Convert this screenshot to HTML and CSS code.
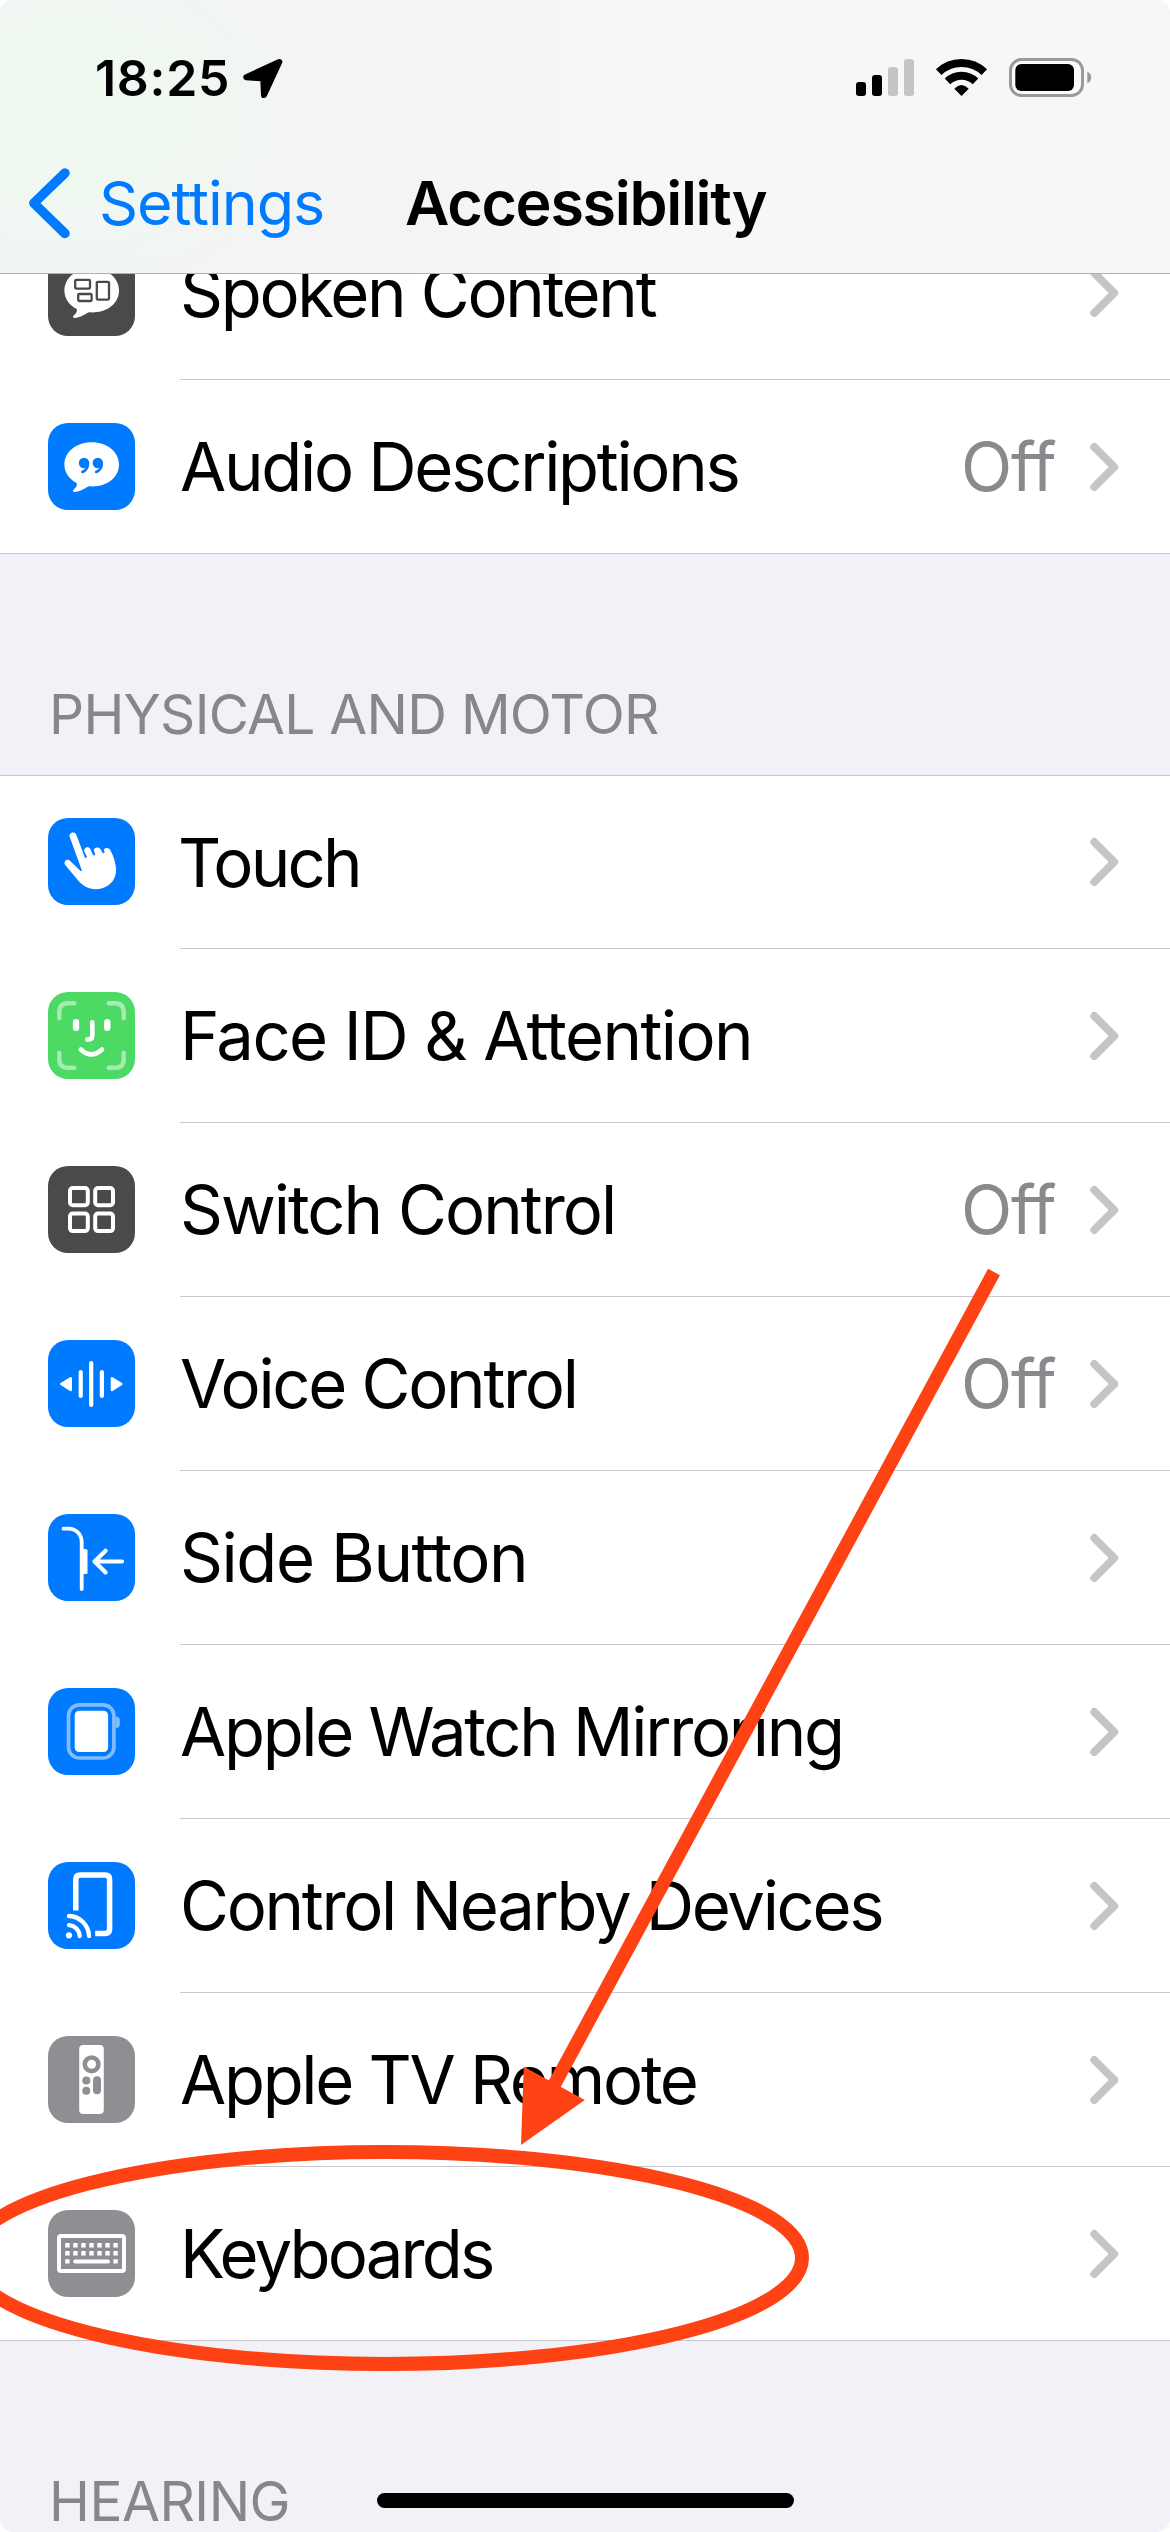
FILE: index.html
```
<!DOCTYPE html>
<html lang="en">
<head>
<meta charset="utf-8">
<title>Accessibility</title>
<link rel="stylesheet" href="styles.css">
</head>
<body>
<svg width="0" height="0" class="defs" aria-hidden="true">
  <symbol id="chevron" viewBox="0 0 34 60">
    <path d="M4.3 10 L24.2 30 L4.3 50" fill="none" stroke="#c5c5c7" stroke-width="8" stroke-linecap="round" stroke-linejoin="round"/>
  </symbol>
</svg>
<div class="screen">
  <header class="top">
    <div class="status">
      <span class="time">18:25</span>
      <svg class="location" width="44" height="44" viewBox="240 56 44 44"><path d="M279.3 62 L246.3 77.2 L263.2 78.6 L264 95 Z" stroke="#000" stroke-width="6" stroke-linejoin="round"/></svg>
      <svg class="indicators" width="240" height="44" viewBox="853 56 240 44">
        <rect x="856" y="82" width="10" height="14" rx="3"/>
        <rect x="872" y="75" width="10" height="21" rx="3"/>
        <rect x="888" y="67" width="10" height="29" rx="3" fill="#c5c5c5"/>
        <rect x="904" y="59" width="10" height="37" rx="3" fill="#c5c5c5"/>
        <g fill="none" stroke="#000">
          <path d="M938.7 72.1 A33 33 0 0 1 984.3 72.1" stroke-width="8"/>
          <path d="M947.5 81.4 A20.2 20.2 0 0 1 975.5 81.4" stroke-width="8"/>
        </g>
        <path d="M961.5 96 L954.3 88.7 Q961.5 81.5 968.7 88.7 Z"/>
        <rect x="1010.5" y="59.5" width="72" height="36" rx="11" fill="#fff" fill-opacity=".5" stroke="#999" stroke-width="3"/>
        <rect x="1015.3" y="64" width="58.7" height="27" rx="6"/>
        <path d="M1087.3 71.5 C1092.5 74 1092.5 81 1087.3 83.5 Z" fill="#999"/>
      </svg>
    </div>
    <nav class="navbar">
      <a class="back">
        <svg width="50" height="80" viewBox="25 163 50 80"><path d="M65 173 L33.8 203.2 L65 233.5" fill="none" stroke="#007aff" stroke-width="9.5" stroke-linecap="round" stroke-linejoin="round"/></svg>
        <span>Settings</span>
      </a>
      <h1 class="title">Accessibility</h1>
    </nav>
  </header>

  <main class="content">
    <ul class="group scrolled">
      <li class="row">
        <svg class="icon" viewBox="0 0 87 87"><rect width="87" height="87" rx="20" fill="#4a4a4a"/>
          <path d="M43.7 19.3 C59.5 19.3 71 29 71 41.5 C71 54.5 59 64.5 41 63.3 C36.5 65.5 32 68.8 26.5 69 C24 68.5 25 66.8 27 65.2 C28.6 63.5 29.2 62.5 28.7 60 C21 56 16.4 49.5 16.4 41.5 C16.4 29 28 19.3 43.7 19.3 Z" fill="#fff"/>
          <g fill="none" stroke="#4a4a4a" stroke-width="2.3"><rect x="27.2" y="30.8" width="14.8" height="8.8" rx="1"/><rect x="30.2" y="45" width="13.4" height="7" rx="1"/><rect x="48.8" y="32.8" width="12.2" height="17.8" rx="1"/></g></svg>
        <div class="cell"><span class="label">Spoken Content</span><svg class="chev"><use href="#chevron"/></svg></div>
      </li>
      <li class="row">
        <svg class="icon" viewBox="0 0 87 87"><rect width="87" height="87" rx="20" fill="#007aff"/>
          <path d="M43.7 19.3 C59.5 19.3 71 29 71 41.5 C71 54.5 59 64.5 41 63.3 C36.5 65.5 32 68.8 26.5 69 C24 68.5 25 66.8 27 65.2 C28.6 63.5 29.2 62.5 28.7 60 C21 56 16.4 49.5 16.4 41.5 C16.4 29 28 19.3 43.7 19.3 Z" fill="#fff"/>
          <g><circle cx="36" cy="40" r="5.2" fill="#007aff"/><path d="M40 39.5 Q40.5 46.5 34.3 49" fill="none" stroke="#007aff" stroke-width="2.5" stroke-linecap="round"/></g>
          <g transform="translate(13.8 0)"><circle cx="36" cy="40" r="5.2" fill="#007aff"/><path d="M40 39.5 Q40.5 46.5 34.3 49" fill="none" stroke="#007aff" stroke-width="2.5" stroke-linecap="round"/></g></svg>
        <div class="cell"><span class="label">Audio Descriptions</span><span class="value">Off</span><svg class="chev"><use href="#chevron"/></svg></div>
      </li>
    </ul>

    <h2 class="heading motor">PHYSICAL AND MOTOR</h2>
    <ul class="group main">
      <li class="row">
        <svg class="icon" viewBox="0 0 87 87"><rect width="87" height="87" rx="20" fill="#007aff"/>
          <path d="M21.7 18.8 C20.3 14.8 26.6 12.6 28.2 16.6 L36.8 39.3 C37.3 40.7 39.2 40 38.9 38.6 L36.2 33.2 C35.5 30 39.5 27.6 42.2 30.7 L45 36.8 C45.8 38.2 47.6 37.4 47.2 36 L45.8 32.6 C46 29.5 50.3 28.2 52.4 31 L54.4 34.6 C55 36 56.9 35.3 56.5 33.8 L55.8 31.6 C57 29.2 61 29.4 62.5 32.4 C66 39 68.3 46.5 68.1 53.5 C67 64.5 58.5 71.2 47 71.2 C38.5 70.8 33.5 66.5 28.5 60.5 L17.2 46.9 C15 43.6 18.8 40 22 42.7 L32.6 53 C33.4 53.5 34 53 33.6 51.8 Z" fill="#fff"/></svg>
        <div class="cell"><span class="label touch">Touch</span><svg class="chev"><use href="#chevron"/></svg></div>
      </li>
      <li class="row">
        <svg class="icon" viewBox="0 0 87 87"><rect width="87" height="87" rx="20" fill="#4cd964"/>
          <g fill="none" stroke="#fff" stroke-linecap="round">
            <path stroke-opacity=".5" stroke-width="4.4" d="M11.3 26.3 V20 Q11.3 11.2 20 11.2 H26.3 M60.7 11.2 H67 Q75.7 11.2 75.7 20 V26.3 M75.7 60.7 V67 Q75.7 75.8 67 75.8 H60.7 M26.3 75.8 H20 Q11.3 75.8 11.3 67 V60.7"/>
            <path stroke-width="6.4" d="M28 30.3 V35.7 M59.3 30.3 V35.7"/>
            <path stroke-width="4.6" d="M44.3 30.3 V44 Q44.3 47.6 39.3 47.6 M32.8 57.5 Q43.3 67.3 54 57.5"/>
          </g></svg>
        <div class="cell"><span class="label face">Face ID &amp; Attention</span><svg class="chev"><use href="#chevron"/></svg></div>
      </li>
      <li class="row">
        <svg class="icon" viewBox="0 0 87 87"><rect width="87" height="87" rx="20" fill="#4a4a4a"/>
          <g fill="none" stroke="#fff" stroke-width="4"><rect x="22" y="22" width="17.8" height="17.2" rx="2.8"/><rect x="47.2" y="22" width="17.8" height="17.2" rx="2.8"/><rect x="22" y="47.5" width="17.8" height="17.6" rx="2.8"/><rect x="47.2" y="47.5" width="17.8" height="17.6" rx="2.8"/></g></svg>
        <div class="cell"><span class="label switch">Switch Control</span><span class="value">Off</span><svg class="chev"><use href="#chevron"/></svg></div>
      </li>
      <li class="row">
        <svg class="icon" viewBox="0 0 87 87"><rect width="87" height="87" rx="20" fill="#007aff"/>
          <path d="M43.2 23 V65 M32.7 32 V56 M53.9 32 V56" stroke="#fff" stroke-width="4.2" stroke-linecap="round"/>
          <path d="M13.3 44 L22.7 38.3 V50 Z M73.3 44 L64 38.3 V50 Z" fill="#fff" stroke="#fff" stroke-width="2.6" stroke-linejoin="round"/></svg>
        <div class="cell"><span class="label">Voice Control</span><span class="value">Off</span><svg class="chev"><use href="#chevron"/></svg></div>
      </li>
      <li class="row">
        <svg class="icon" viewBox="0 0 87 87"><rect width="87" height="87" rx="20" fill="#007aff"/>
          <g fill="none" stroke="#fff" stroke-width="3.8" stroke-linecap="round" stroke-linejoin="round"><path d="M15.5 14.7 H20 C28 14.7 33.7 20 33.7 28.5 V75"/><path d="M46.5 47.5 H74 M57.6 36.8 L46.5 47.5 L57.6 58.4" stroke-width="4.2"/></g>
          <path d="M34 35 H38 Q39.5 35 39.5 36.5 V58.5 Q39.5 60 38 60 H34 Z" fill="#fff"/></svg>
        <div class="cell"><span class="label side">Side Button</span><svg class="chev"><use href="#chevron"/></svg></div>
      </li>
      <li class="row">
        <svg class="icon" viewBox="0 0 87 87"><rect width="87" height="87" rx="20" fill="#007aff"/>
          <rect x="20.5" y="16.8" width="45.4" height="53.2" rx="11" fill="none" stroke="#80bdff" stroke-width="3.7"/>
          <path d="M67.7 28.5 Q71.8 28.5 71.8 32 V36.5 Q71.8 40 67.7 40 Z" fill="#80bdff"/>
          <rect x="26.7" y="22.7" width="33.4" height="41.3" rx="4.5" fill="#fff"/></svg>
        <div class="cell"><span class="label">Apple Watch Mirroring</span><svg class="chev"><use href="#chevron"/></svg></div>
      </li>
      <li class="row">
        <svg class="icon" viewBox="0 0 87 87"><rect width="87" height="87" rx="20" fill="#007aff"/>
          <g fill="none" stroke="#fff"><path d="M27.8 48.5 V17.5 Q27.8 13.1 32.2 13.1 H57.2 Q61.6 13.1 61.6 17.5 V67 Q61.6 71.5 57.2 71.5 H47.2" stroke-width="5.5"/>
          <path d="M21 63.2 A11.5 11.5 0 0 1 31.7 74 M21 54 A20.8 20.8 0 0 1 41 74" stroke-width="4.3" stroke-linecap="round"/></g><circle cx="21" cy="73.3" r="3.1" fill="#fff"/></svg>
        <div class="cell"><span class="label">Control Nearby Devices</span><svg class="chev"><use href="#chevron"/></svg></div>
      </li>
      <li class="row">
        <svg class="icon" viewBox="0 0 87 87"><rect width="87" height="87" rx="20" fill="#8e8e93"/>
          <rect x="31.2" y="9" width="24.6" height="69" rx="4" fill="#fff"/>
          <circle cx="43.6" cy="28.3" r="6.8" fill="none" stroke="#8e8e93" stroke-width="4.6"/>
          <g fill="#8e8e93"><circle cx="38.3" cy="44.5" r="4"/><circle cx="38.3" cy="54.7" r="4"/><rect x="45" y="40.3" width="8" height="18" rx="4"/></g></svg>
        <div class="cell"><span class="label">Apple TV Remote</span><svg class="chev"><use href="#chevron"/></svg></div>
      </li>
      <li class="row">
        <svg class="icon" viewBox="0 0 87 87"><rect width="87" height="87" rx="20" fill="#8e8e93"/>
          <rect x="11" y="26" width="65" height="35" rx="2" fill="none" stroke="#fff" stroke-width="4"/>
          <g stroke="#fff" stroke-width="4.4"><path d="M17.2 35.2 H70.5 M17.2 43.3 H70.5" stroke-dasharray="4.4 3.63"/><path d="M17.2 51.4 H21.6 M65.4 51.4 H69.8"/><path d="M27.2 51.4 H60" stroke-width="4" stroke-linecap="round"/></g></svg>
        <div class="cell"><span class="label keys">Keyboards</span><svg class="chev"><use href="#chevron"/></svg></div>
      </li>
    </ul>
    <h2 class="heading">HEARING</h2>
  </main>

  <div class="home"></div>
  <svg class="markup" width="1170" height="2532" viewBox="0 0 1170 2532">
    <ellipse cx="385" cy="2258" rx="417" ry="106" fill="none" stroke="#ff4214" stroke-width="14"/>
    <path d="M994 1272 L553 2087" stroke="#ff4214" stroke-width="13.5"/>
    <path d="M521 2145 L523.8 2066.7 L584.8 2100 Z" fill="#ff4214"/>
  </svg>
</div>
</body>
</html>
```
FILE: styles.css
```
* { box-sizing: border-box; }

body {
  margin: 0;
  background: #fff;
  font-family: Inter, "Liberation Sans", sans-serif;
  color: #000;
}

.defs { position: absolute; }

.screen {
  position: relative;
  display: flex;
  flex-direction: column;
  width: 1170px;
  height: 2532px;
  overflow: hidden;
  border-radius: 14px;
  background: #f2f1f7;
}

.top {
  flex: none;
  height: 274px;
  border-bottom: 1px solid #b0b0b2;
  background:
    radial-gradient(ellipse 260px 190px at 70px 110px, #eefaf0 0%, rgba(240, 248, 242, 0) 100%),
    linear-gradient(90deg, #f2f4f3 0%, #f4f4f4 35%, #f7f7f7 55%);
}

.status {
  display: flex;
  align-items: center;
  height: 156px;
  padding-left: 95px;
}

.time {
  width: 145px;
  font-size: 50px;
  font-weight: 600;
  line-height: 60px;
  letter-spacing: 0.69px;
}

.location, .indicators { flex: none; }

.indicators { margin-left: 569px; }

.navbar {
  display: grid;
  grid-template-columns: 405px 1fr;
  align-items: center;
  height: 94px;
}

.back {
  display: flex;
  align-items: center;
  gap: 24px;
  padding-left: 25px;
  color: #007aff;
  font-size: 61px;
  letter-spacing: -1.05px;
}

.title {
  margin: 0;
  font-size: 61px;
  font-weight: 600;
  letter-spacing: -1.3px;
}

.content { overflow: hidden; flex: 1; }

.group {
  margin: 0;
  padding: 0;
  list-style: none;
  background: #fff;
  border-top: 1px solid #c8c7cc;
}

.scrolled { margin-top: -68px; border-top: 0; }

.row {
  display: flex;
  align-items: flex-start;
  height: 174px;
}

.row:last-child { border-bottom: 1px solid #c8c7cc; }

.icon {
  flex: none;
  width: 87px;
  height: 87px;
  margin: 43px 45px 0 48px;
}

.cell {
  display: flex;
  flex: 1;
  align-items: center;
  height: 174px;
  padding-right: 46px;
  border-bottom: 1px solid #c8c7cc;
  font-size: 67px;
  line-height: 81px;
  letter-spacing: -2.3px;
}

.row:last-child .cell { height: 173px; border-bottom: 0; }

/* the group's top hairline takes the first pixel of its first row */
.main .row:first-child, .main .row:first-child .cell { height: 173px; }
.main .row:first-child .icon { margin-top: 42px; }

.label { flex: 1; white-space: nowrap; }
.touch { margin-left: -2px; letter-spacing: -2.77px; }
.face { letter-spacing: -1.57px; }
.switch { letter-spacing: -2px; }
.side { letter-spacing: -1.43px; }
.keys { letter-spacing: -2.84px; }

.value { width: 129px; color: #8a8a8e; letter-spacing: -1.3px; }

.chev { flex: none; width: 34px; height: 60px; }

.heading {
  height: 220px;
  margin: 0;
  padding: 127px 48px 0 49px;
  color: #86868b;
  font-size: 55px;
  font-weight: 400;
  line-height: 66px;
  letter-spacing: -0.48px;
}

.motor { height: 221px; letter-spacing: -0.74px; }

.home {
  position: absolute;
  left: 377px;
  top: 2493px;
  width: 417px;
  height: 15px;
  border-radius: 8px;
  background: #000;
}

.markup { position: absolute; left: 0; top: 0; }
```
